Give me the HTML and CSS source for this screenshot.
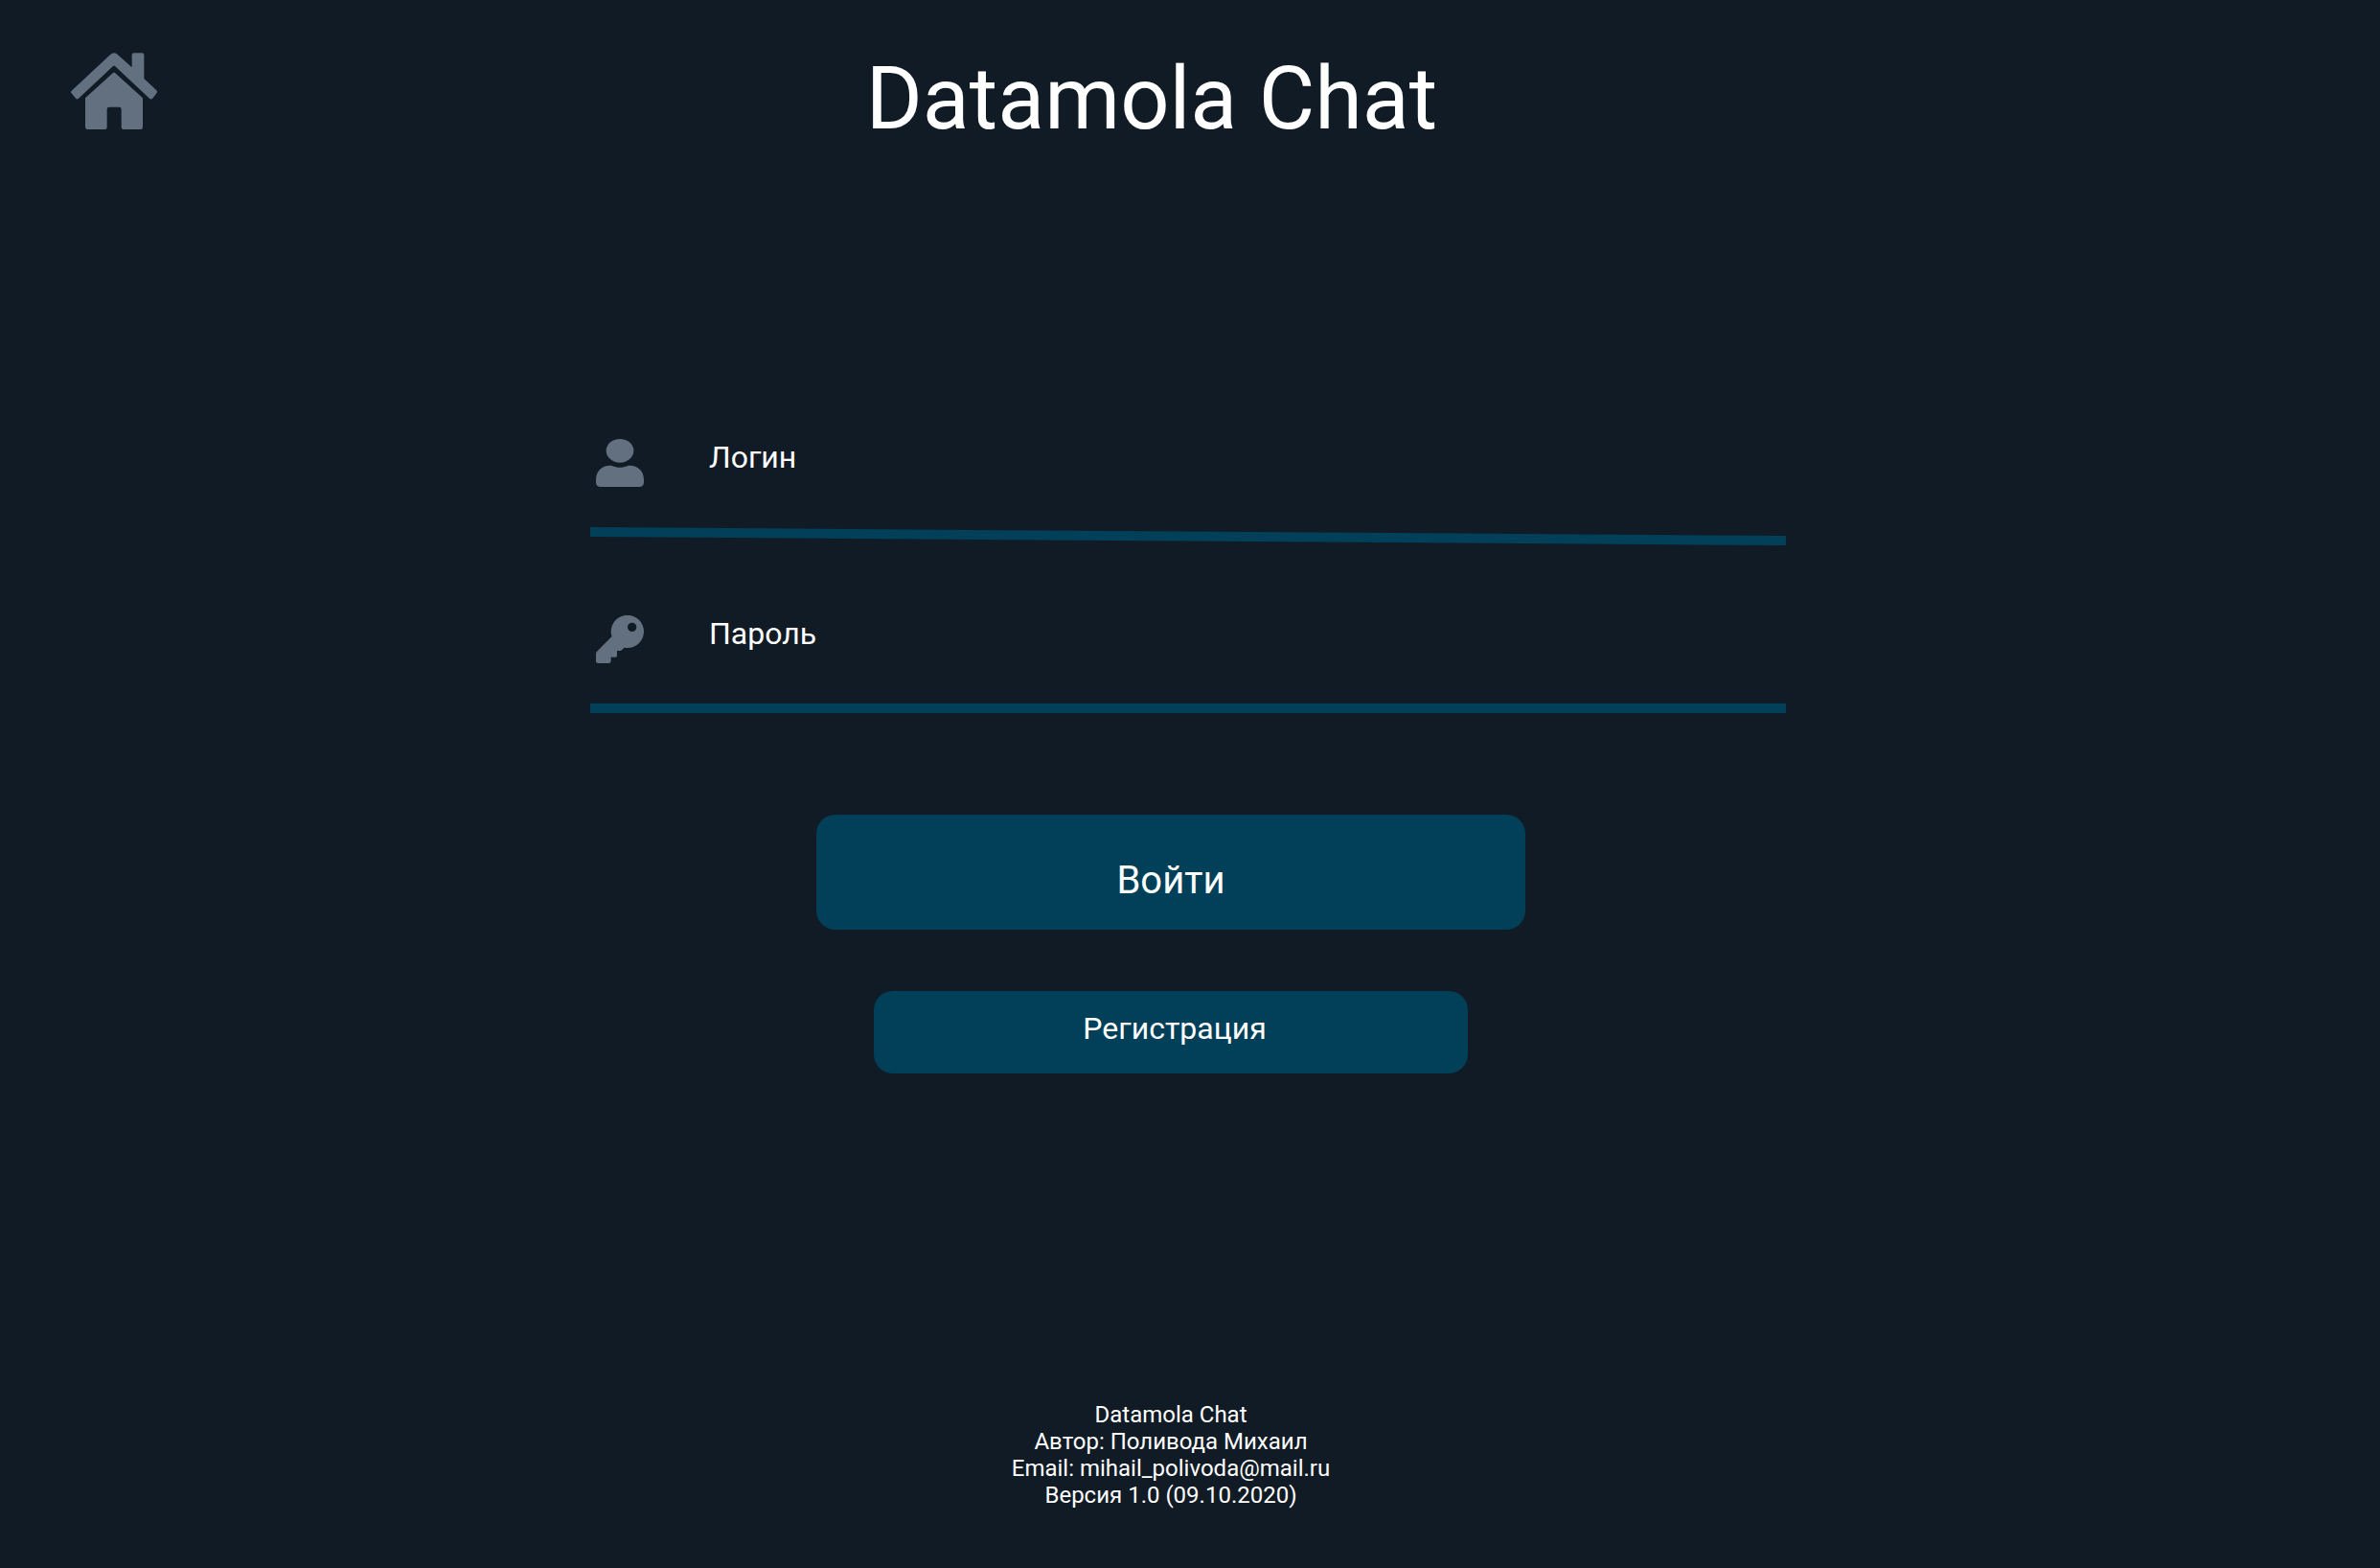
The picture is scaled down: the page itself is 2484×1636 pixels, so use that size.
FILE: index.html
```html
<!DOCTYPE html>
<html lang="ru">
<head>
  <meta charset="utf-8">
  <meta name="viewport" content="width=device-width, initial-scale=1">
  <title>Datamola Chat</title>
  <link rel="stylesheet" href="styles.css">
</head>
<body class="page">
  <header class="header">
    <a class="home" href="#" aria-label="Datamola Chat">
      <svg class="home-icon" viewBox="72 75 270 240" aria-hidden="true">
        <path d="M74 194L193 83Q207 69 221 83L263 121V82Q263 76 269 76H295Q301 76 301 82V156L340 193Q344 197 340 202L329 217Q324 223 318 218L210 117Q207 114 204 117L96 218Q90 223 86 217L74 202Q70 198 74 194Z"/>
        <path d="M204 138Q207 135 210 138L297 217V308Q297 315 290 315H237Q230 315 230 308V252Q230 245 223 245H192Q185 245 185 252V308Q185 315 178 315H124Q117 315 117 308V217Z"/>
      </svg>
    </a>
    <h1 class="title">Datamola Chat</h1>
  </header>

  <main class="main">
    <form class="login">
      <div class="field">
        <svg class="field-icon" viewBox="66 54 150 150" aria-hidden="true">
          <ellipse cx="141" cy="91" rx="43" ry="37"/>
          <path d="M66 181C66 154 86 137 109 137C121 137 124 143 141 143C158 143 161 137 173 137C196 137 216 154 216 181V190Q216 204 201 204H81Q66 204 66 190Z"/>
        </svg>
        <label class="field-label" for="login">Логин</label>
        <input class="field-input" id="login" type="text" autocomplete="username">
      </div>
      <div class="rule rule-slanted"></div>

      <div class="field field-next">
        <svg class="field-icon" viewBox="66 66 150 150" aria-hidden="true">
          <path fill-rule="evenodd" d="M216 117A51 51 0 0 1 165 168Q159 168 154 167L147 175Q145 177 141 177H132V192Q132 197 127 197H113V209Q113 216 106 216H73Q66 216 66 209V186Q66 182 69 179L116 132Q113 125 113 117A51 51 0 1 1 216 117ZM179 89A14 14 0 1 0 179 117A14 14 0 1 0 179 89Z"/>
        </svg>
        <label class="field-label" for="password">Пароль</label>
        <input class="field-input" id="password" type="password" autocomplete="current-password">
      </div>
      <div class="rule"></div>

      <div class="actions">
        <button class="button button-primary" type="submit">Войти</button>
        <button class="button button-secondary" type="button">Регистрация</button>
      </div>
    </form>
  </main>

  <footer class="footer">
    <div>Datamola Chat</div>
    <div>Автор: Поливода Михаил</div>
    <div>Email: mihail_polivoda@mail.ru</div>
    <div>Версия 1.0 (09.10.2020)</div>
  </footer>
</body>
</html>
```
FILE: styles.css
```css
* {
  box-sizing: border-box;
}

.page {
  margin: 0;
  min-height: 100vh;
  display: flex;
  flex-direction: column;
  background: #111b26;
  color: #fff;
  font-family: Roboto, "Liberation Sans", sans-serif;
}

.header {
  display: grid;
  grid-template-columns: 1fr auto 1fr;
  align-items: start;
  padding: 55px 154px 0 74px;
}

.home {
  width: 90px;
}

.home-icon {
  display: block;
  width: 90px;
  height: 80px;
  fill: #637080;
}

.title {
  margin: 0;
  font-size: 90px;
  font-weight: 400;
  line-height: 98px;
}

.main {
  padding: 305px 4px 64px 0;
}

.login {
  width: 100%;
  max-width: 1248px;
  margin: 0 auto;
}

.field {
  display: flex;
  align-items: flex-start;
  padding: 0 6px 42px;
}

.field-next {
  margin-top: 73px;
}

.field-icon {
  flex: none;
  width: 50px;
  height: 50px;
  margin-right: 68px;
  fill: #637080;
}

.field-label {
  font-size: 32px;
  line-height: 38px;
}

.field-input {
  flex: 1;
  min-width: 0;
  height: 38px;
  margin-left: 24px;
  padding: 0;
  border: 0;
  outline: 0;
  background: transparent;
  color: inherit;
  font: inherit;
  font-size: 32px;
}

.rule {
  height: 10px;
  background: #024059;
}

.rule-slanted {
  height: 19px;
  clip-path: polygon(0 0, 100% 9px, 100% 100%, 0 10px);
}

.actions {
  display: flex;
  flex-direction: column;
  align-items: center;
  gap: 64px;
  margin-top: 106px;
  padding-right: 36px;
}

.button {
  width: 100%;
  border: 0;
  border-radius: 20px;
  background: #024059;
  color: inherit;
  font-family: inherit;
  cursor: pointer;
}

.button-primary {
  max-width: 740px;
  height: 120px;
  padding: 16px 0 0;
  font-size: 40px;
}

.button-secondary {
  max-width: 620px;
  height: 86px;
  padding: 0 0 8px 8px;
  font-size: 32px;
}

.footer {
  margin-top: auto;
  padding: 0 40px 62px 0;
  font-size: 24px;
  line-height: 28px;
  text-align: center;
}
```
